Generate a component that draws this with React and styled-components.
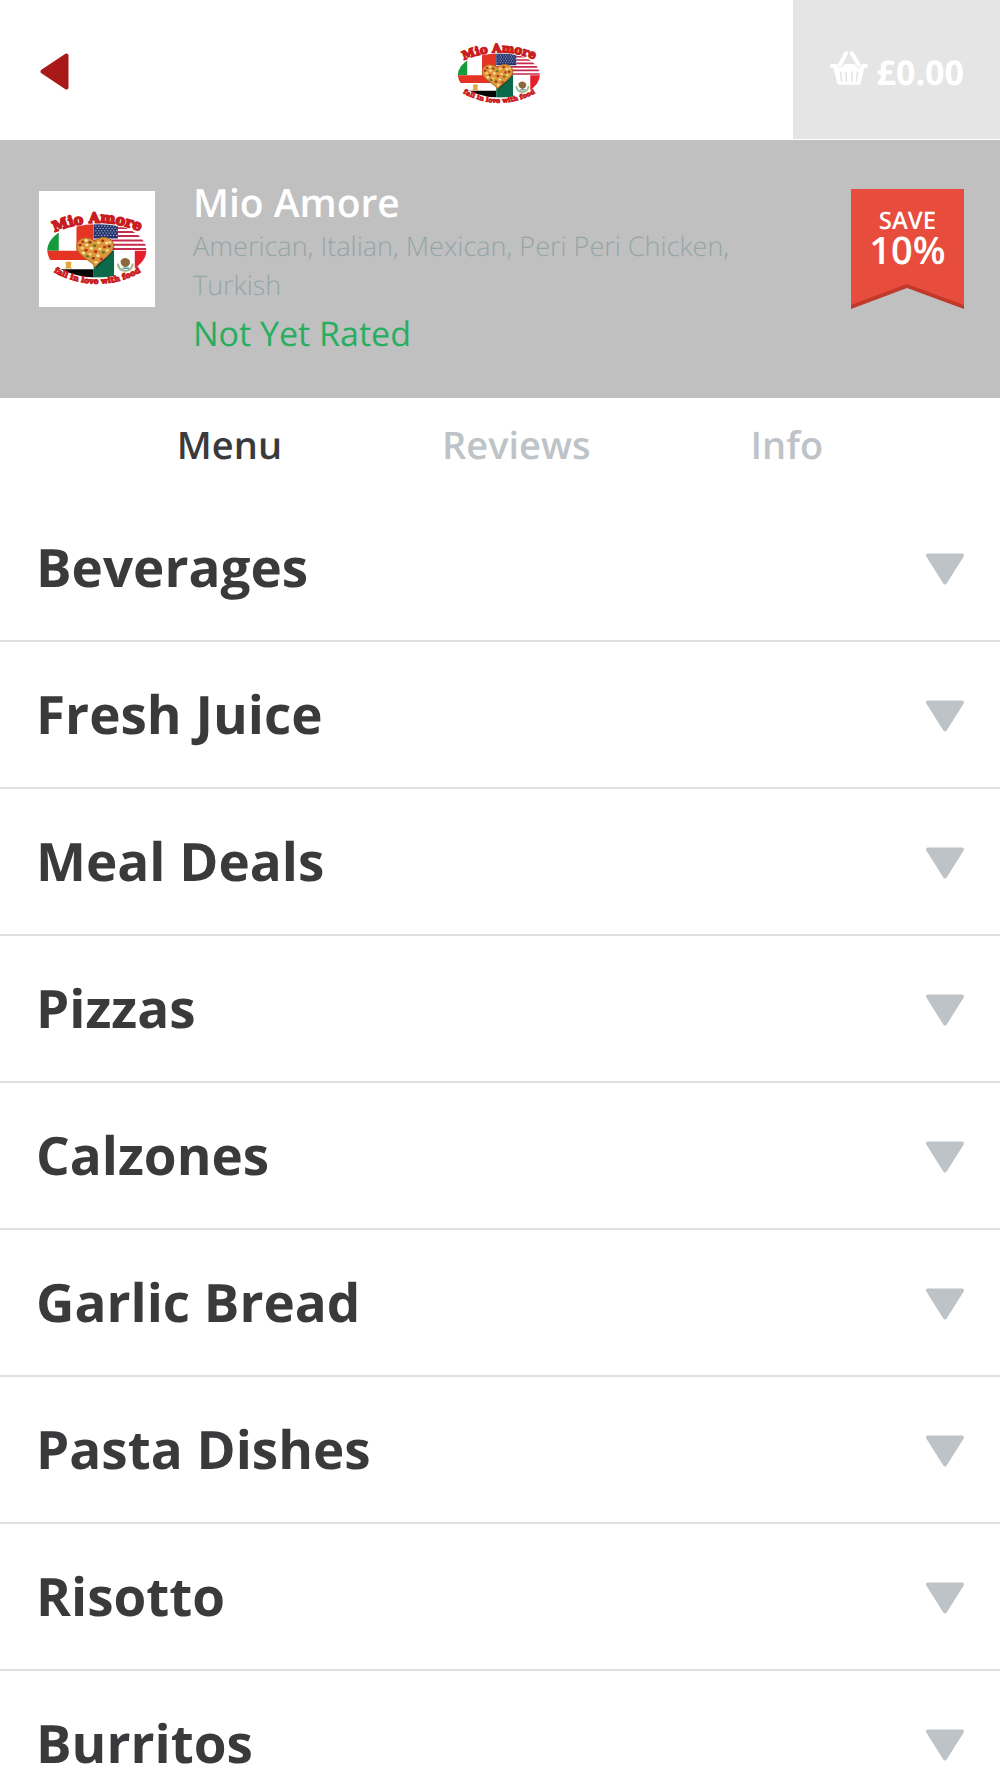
import React, { useId } from "react";
import styled, { createGlobalStyle } from "styled-components";

const GlobalStyle = createGlobalStyle`
  *, *::before, *::after { box-sizing: border-box; }
  body {
    margin: 0;
    background: #ffffff;
    color: #3a3a3c;
    font-family: "Open Sans", "Noto Sans", sans-serif;
    text-rendering: geometricPrecision;
  }
  button { font-family: inherit; text-rendering: inherit; margin: 0; border: 0; background: none; cursor: pointer; }
  h1, h2, p, ul { margin: 0; padding: 0; }
  svg { display: block; flex: none; }
`;

const Page = styled.div`
  height: 100vh;
  overflow-x: hidden;
  overflow-y: auto;
  scrollbar-width: none;
`;

const Header = styled.header`
  display: grid;
  grid-template-columns: 1fr auto 1fr;
  height: 140px;
  padding-bottom: 1px;
`;

const BackButton = styled.button`
  justify-self: start;
  display: flex;
  align-items: center;
  padding: 3px 40px 0;
`;

const HomeLink = styled.a`
  padding: 26px 2px 0 0;
`;

const BasketButton = styled.button`
  justify-self: end;
  display: flex;
  align-items: center;
  gap: 9px;
  padding: 4px 36px 0 37px;
  background: #e5e5e5;
  color: #ffffff;
  font-size: 34px;
  line-height: 48px;
  font-weight: 700;

  svg { margin-bottom: 8px; }
`;

const Banner = styled.section`
  display: flex;
  align-items: flex-start;
  min-height: 258px;
  padding: 40px 36px 36px 39px;
  background: #c0c0c0;
`;

const Thumbnail = styled.div`
  flex: none;
  margin-top: 11px;
  background: #ffffff;
`;

const Details = styled.div`
  flex: 1;
  padding: 0 100px 0 38px;
`;

const Name = styled.h1`
  color: #ffffff;
  font-size: 39px;
  line-height: 46px;
  font-weight: 600;
`;

const Cuisines = styled.p`
  color: #95a5a6;
  font-size: 27px;
  line-height: 39px;
  font-weight: 300;
`;

const Rating = styled.p`
  color: #27ae60;
  font-size: 34px;
  line-height: 58px;
`;

const Ribbon = styled.div`
  position: relative;
  flex: none;
  width: 113px;
  height: 120px;
  margin-top: 9px;
  padding-top: 16px;
  color: #ffffff;
  text-align: center;
`;

const RibbonShape = styled.svg`
  position: absolute;
  inset: 0;
`;

const RibbonText = styled.div`
  position: relative;
  font-size: ${(p) => (p.$large ? "38px" : "24px")};
  line-height: ${(p) => (p.$large ? "26px" : "32px")};
  font-weight: 600;
`;

const Tabs = styled.nav`
  display: flex;
  justify-content: center;
  gap: 160px;
  height: 97px;
`;

const Tab = styled.button`
  padding: 0 0 4px;
  color: ${(p) => (p.$active ? "#3a3a3c" : "#bdc3c7")};
  font-size: 38px;
  line-height: 52px;
  font-weight: 600;
`;

const CategoryList = styled.ul`
  list-style: none;
`;

const Category = styled.li`
  border-bottom: 2px solid #e0e0e0;
`;

const CategoryButton = styled.button`
  display: flex;
  align-items: center;
  justify-content: space-between;
  width: 100%;
  height: 145px;
  padding: 0 36px 2px;
  color: #3a3a3c;
  font-size: 53px;
  line-height: 72px;
  font-weight: 700;
  text-align: left;

  svg { margin-top: 5px; }
`;

function BackIcon() {
  return (
    <svg width="29" height="37" viewBox="0 0 29 37" aria-hidden="true">
      <path d="M2.5 18.5 26.5 2.5V34.5Z" fill="#a81917" stroke="#a81917" strokeWidth="4" strokeLinejoin="round" />
    </svg>
  );
}

function ArrowDown() {
  return (
    <svg width="38" height="32" viewBox="0 0 38 32" aria-hidden="true">
      <path d="M2 2.500H36L19 29.500Z" fill="#bdc3c7" stroke="#bdc3c7" strokeWidth="4" strokeLinejoin="round" />
    </svg>
  );
}

function BasketIcon() {
  return (
    <svg width="38" height="34" viewBox="0 0 115 102" aria-hidden="true">
      <path
        d="M5 39Q0 39 0 44Q0 49 6 50H10L22 97Q23 102 29 102H86Q92 102 93 97L104 50H109Q115 49 115 44Q115 39 109 39H97Q94 51 86 50Q80 49 76 40Q60 36 43 40Q38 50 30 50Q22 49 21 39Z"
        fill="#fff"
      />
      <path d="M49 6 30 42M66 6 87 42" stroke="#fff" strokeWidth="12" strokeLinecap="round" />
      <path d="M32 64 35 90M49 64V90M66 64V90M83 64 80 90" stroke="#e5e5e5" strokeWidth="5" strokeLinecap="round" />
    </svg>
  );
}

const TOPPINGS = [
  [158, 186, "#c8322b"], [170, 196, "#f6e3a0"], [180, 188, "#8a3b1c"], [156, 205, "#f2d27a"],
  [168, 212, "#b52a1e"], [184, 206, "#f7e6b0"], [194, 198, "#5f7a2c"], [206, 189, "#f3d98a"],
  [218, 183, "#b52a1e"], [230, 190, "#f7e6b0"], [238, 200, "#8a3b1c"], [224, 202, "#c8322b"],
  [210, 208, "#f6e3a0"], [197, 216, "#b52a1e"], [180, 224, "#f2d27a"], [190, 236, "#8a3b1c"],
  [204, 228, "#f7e6b0"], [220, 218, "#5f7a2c"], [232, 212, "#f2d27a"], [214, 238, "#c8322b"],
  [198, 248, "#f6e3a0"], [172, 230, "#5f7a2c"], [160, 220, "#f7e6b0"], [240, 188, "#f2d27a"],
  [168, 182, "#f7e6b0"], [150, 196, "#b52a1e"],
];

function Logo({ size }) {
  const id = useId();
  const oval = `${id}oval`;
  const top = `${id}top`;
  const bottom = `${id}bottom`;
  const lettering = {
    fill: "#c91c20",
    stroke: "#c91c20",
    strokeLinejoin: "round",
    fontFamily: '"DejaVu Serif", serif',
    fontWeight: 700,
    textAnchor: "middle",
  };
  return (
    <svg width={size} height={size} viewBox="26 33 350 350" role="img" aria-label="Mio Amore, fall in love with food">
      <defs>
        <clipPath id={oval}>
          <ellipse cx="200.500" cy="212" rx="149.500" ry="84" />
        </clipPath>
        <path id={top} d="M54 167Q200 92 350 163" fill="none" />
        <path id={bottom} d="M44 262Q202 364 360 262" fill="none" />
      </defs>
      <g clipPath={`url(#${oval})`}>
        <path d="M50 125H86V213H50Z" fill="#159a3c" />
        <path d="M86 125H139V213H86Z" fill="#fff" />
        <path d="M139 125H191V213H139ZM50 213H191V241H50Z" fill="#e63424" />
        <path d="M50 241H191V269H50Z" fill="#fff" />
        <path d="M50 269H191V294H50Z" fill="#060606" />
        <path d="M106 248Q115 243 124 248L122 262L127 267H103L108 262Z" fill="#e6a73a" />
        <path d="M191 133H351V213H191Z" fill="#fff" />
        <path d="M264 145H351M264 157H351M264 169H351M191 182H351M191 195H351M191 208H351" stroke="#c62a4c" strokeWidth="6" />
        <path d="M191 133H264V176H191Z" fill="#24346e" />
        <path d="M196 139H262M200 146H262M196 153H262M200 160H262M196 167H262" stroke="#dfe4f2" strokeWidth="3" strokeDasharray="3 6" />
        <path d="M191 213H253V294H191Z" fill="#0b6a49" />
        <path d="M253 213H315V294H253Z" fill="#fff" />
        <path d="M315 213H351V294H315Z" fill="#e5202d" />
        <path d="M264 252Q266 273 287 274Q306 273 309 252" fill="none" stroke="#9db58a" strokeWidth="6" />
        <path d="M272 244Q278 233 290 236Q303 240 300 252Q296 264 284 262Q272 258 272 244Z" fill="#8a6a3c" />
        <path d="M278 266H298" stroke="#4f9aa0" strokeWidth="4" />
      </g>
      <use href={`#${top}`} stroke="#fff" strokeWidth="8" />
      <use href={`#${bottom}`} stroke="#fff" strokeWidth="18" transform="translate(0 -9)" />
      <path
        d="M200 268C190 246 145 236 143 203C143 178 176 170 197 190C215 168 252 174 254 200C254 228 220 240 200 268Z"
        fill="#111"
        opacity="0.3"
      />
      <path
        d="M195 263C185 240 141 231 140 199C141 173 174 167 194 185C212 165 249 171 251 197C250 226 214 238 195 263Z"
        fill="#dc9838"
        stroke="#b86d24"
        strokeWidth="3"
      />
      {TOPPINGS.map(([x, y, color]) => (
        <ellipse key={`${x}-${y}`} cx={x} cy={y} rx="5" ry="4" fill={color} />
      ))}
      <text {...lettering} fontSize="43" strokeWidth="5">
        <textPath href={`#${top}`} startOffset="50%">Mio Amore</textPath>
      </text>
      <text {...lettering} fontSize="24" strokeWidth="3">
        <textPath href={`#${bottom}`} startOffset="50%">fall in love with food</textPath>
      </text>
    </svg>
  );
}

const TABS = ["Menu", "Reviews", "Info"];

const CATEGORIES = [
  "Beverages",
  "Fresh Juice",
  "Meal Deals",
  "Pizzas",
  "Calzones",
  "Garlic Bread",
  "Pasta Dishes",
  "Risotto",
  "Burritos",
];

export default function App() {
  return (
    <Page>
      <GlobalStyle />
      <Header>
        <BackButton type="button" aria-label="Back">
          <BackIcon />
        </BackButton>
        <HomeLink href="#home">
          <Logo size={96} />
        </HomeLink>
        <BasketButton type="button">
          <BasketIcon />
          £0.00
        </BasketButton>
      </Header>
      <Banner>
        <Thumbnail>
          <Logo size={116} />
        </Thumbnail>
        <Details>
          <Name>Mio Amore</Name>
          <Cuisines>American, Italian, Mexican, Peri Peri Chicken, Turkish</Cuisines>
          <Rating>Not Yet Rated</Rating>
        </Details>
        <Ribbon>
          <RibbonShape width="113" height="120" viewBox="0 0 113 120" aria-hidden="true">
            <path d="M0 0H113V120L56 99L0 120Z" fill="#c0392b" />
            <path d="M0 0H113V116L56 95L0 116Z" fill="#e74c3c" />
          </RibbonShape>
          <RibbonText>SAVE</RibbonText>
          <RibbonText $large>10%</RibbonText>
        </Ribbon>
      </Banner>
      <Tabs>
        {TABS.map((tab, i) => (
          <Tab key={tab} type="button" $active={i === 0} aria-current={i === 0 ? "page" : undefined}>
            {tab}
          </Tab>
        ))}
      </Tabs>
      <CategoryList>
        {CATEGORIES.map((name) => (
          <Category key={name}>
            <CategoryButton type="button" aria-expanded="false">
              {name}
              <ArrowDown />
            </CategoryButton>
          </Category>
        ))}
      </CategoryList>
    </Page>
  );
}
